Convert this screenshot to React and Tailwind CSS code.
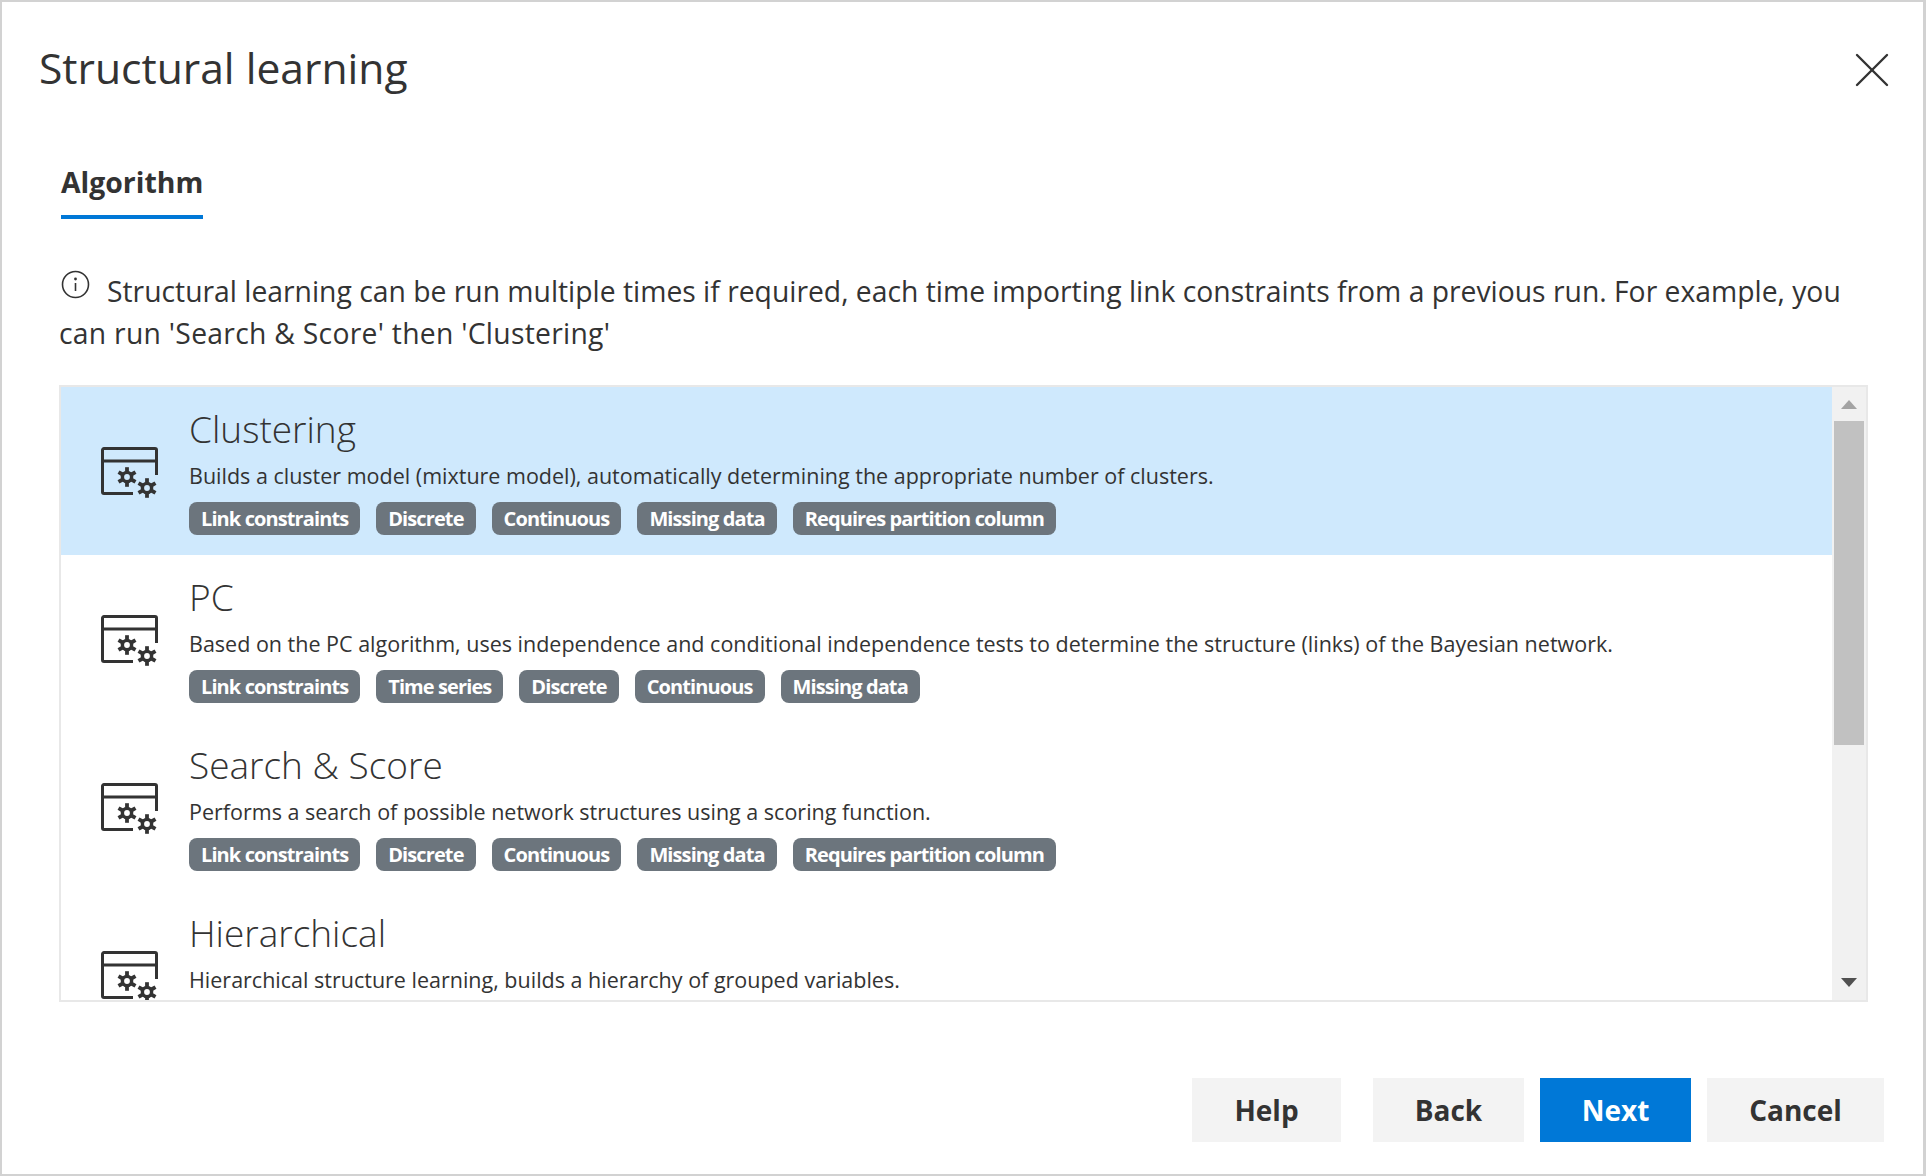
import React from 'react';
import { X } from 'lucide-react';

const ALGORITHMS = [
  {
    name: 'Clustering',
    desc: 'Builds a cluster model (mixture model), automatically determining the appropriate number of clusters.',
    tags: ['Link constraints', 'Discrete', 'Continuous', 'Missing data', 'Requires partition column'],
    selected: true,
  },
  {
    name: 'PC',
    desc: 'Based on the PC algorithm, uses independence and conditional independence tests to determine the structure (links) of the Bayesian network.',
    tags: ['Link constraints', 'Time series', 'Discrete', 'Continuous', 'Missing data'],
  },
  {
    name: 'Search & Score',
    desc: 'Performs a search of possible network structures using a scoring function.',
    tags: ['Link constraints', 'Discrete', 'Continuous', 'Missing data', 'Requires partition column'],
  },
  {
    name: 'Hierarchical',
    desc: 'Hierarchical structure learning, builds a hierarchy of grouped variables.',
    tags: [],
  },
];

// small cog used twice inside the algorithm icon
const Gear = ({ x, y }) => (
  <g transform={`translate(${x} ${y})`} stroke="#333" fill="none">
    <circle r="4.6" strokeWidth="3.4" />
    {[0, 60, 120, 180, 240, 300].map((a) => (
      <line key={a} x1="0" y1="-5.5" x2="0" y2="-9.8" strokeWidth="3.8" transform={`rotate(${a})`} />
    ))}
  </g>
);

const AlgorithmIcon = () => (
  <svg width="57" height="54" viewBox="0 0 57 54" className="shrink-0 mt-[60px]">
    <path
      d="M32 46.5H3a1.5 1.5 0 0 1-1.5-1.5V3A1.5 1.5 0 0 1 3 1.5h51A1.5 1.5 0 0 1 55.5 3v25"
      fill="none"
      stroke="#333"
      strokeWidth="3"
    />
    <line x1="1.5" y1="14" x2="55.5" y2="14" stroke="#333" strokeWidth="3" />
    <Gear x={26} y={30} />
    <Gear x={46} y={41} />
  </svg>
);

const Row = ({ item }) => (
  <div className={`h-[168px] shrink-0 flex items-start pl-10 ${item.selected ? 'bg-[#cfe9fd]' : ''}`}>
    <AlgorithmIcon />
    <div className="ml-[31px]">
      <div className="text-[37px] leading-[52px] font-light text-[#333] mt-4">{item.name}</div>
      <div className="text-[21.5px] leading-[30px] text-[#333] mt-1.5">{item.desc}</div>
      {item.tags.length > 0 && (
        <div className="flex gap-4 mt-[11px]">
          {item.tags.map((t) => (
            <span key={t} className="h-[33px] px-3 rounded-lg bg-[#6c757d] text-white text-[20px] leading-[33px] font-bold tracking-[-0.9px]">
              {t}
            </span>
          ))}
        </div>
      )}
    </div>
  </div>
);

const Scrollbar = () => (
  <div className="w-[34px] shrink-0 bg-[#f1f1f1] flex flex-col items-center">
    <div className="h-[34px] w-full flex items-center justify-center">
      <div className="w-0 h-0 border-x-[8px] border-x-transparent border-b-[9px] border-b-[#a3a3a3]" />
    </div>
    <div className="w-[30px] h-[324px] bg-[#c1c1c1]" />
    <div className="flex-1 flex items-end pb-[13px]">
      <div className="w-0 h-0 border-x-[8px] border-x-transparent border-t-[9px] border-t-[#505050]" />
    </div>
  </div>
);

const FooterButton = ({ children, primary, className = '' }) => (
  <button
    type="button"
    className={`h-16 font-bold text-[28px] ${primary ? 'bg-[#0078d7] text-white' : 'bg-[#f3f3f3] text-[#333]'} ${className}`}
  >
    {children}
  </button>
);

export default function App() {
  return (
    <div className="w-[1926px] h-[1176px] bg-white border-t-2 border-l-2 border-r-[3px] border-b-2 border-[#d2d2d2] flex flex-col text-[#333] font-['Open_Sans','Noto_Sans',sans-serif] overflow-hidden">
      {/* header */}
      <div className="flex items-start justify-between h-[128px] shrink-0 pl-[37px] pr-[21px]">
        <h1 className="text-[42.6px] leading-[60px] mt-[35px] font-normal">Structural learning</h1>
        <X size={60} strokeWidth={2.4} absoluteStrokeWidth className="mt-[38px] text-[#333]" />
      </div>

      {/* tab */}
      <div className="pl-[59px] shrink-0">
        <div className="inline-block h-[89px] pt-[33px] border-b-4 border-[#0078d7] text-[28.4px] leading-[38px] font-bold">
          Algorithm
        </div>
      </div>

      {/* intro */}
      <div className="pl-[57px] h-[84px] mt-[51px] text-[28.3px] leading-[42px] shrink-0">
        <div className="h-[42px] whitespace-nowrap">
          <svg width="29" height="29" viewBox="0 0 29 29" className="inline-block align-[3px] ml-[2px] mr-[17px]">
            <circle cx="14.5" cy="14.5" r="13" fill="none" stroke="#333" strokeWidth="1.6" />
            <circle cx="14.5" cy="9" r="1.4" fill="#333" />
            <line x1="14.5" y1="13" x2="14.5" y2="21" stroke="#333" strokeWidth="1.6" />
          </svg>
          Structural learning can be run multiple times if required, each time importing link constraints from a previous run. For example, you
        </div>
        <div className="h-[42px] tracking-[0.28px]">can run 'Search &amp; Score' then 'Clustering'</div>
      </div>

      {/* list */}
      <div className="ml-[57px] mr-[55px] mt-[31px] h-[617px] shrink-0 border-2 border-[#e8e8e8] flex overflow-hidden">
        <div className="flex-1 min-w-0 flex flex-col overflow-hidden">
          {ALGORITHMS.map((a) => (
            <Row key={a.name} item={a} />
          ))}
        </div>
        <Scrollbar />
      </div>

      {/* footer */}
      <div className="flex justify-end mt-[76px] pr-[39px]">
        <FooterButton className="w-[149px] mr-8">Help</FooterButton>
        <FooterButton className="w-[151px] mr-4">Back</FooterButton>
        <FooterButton primary className="w-[151px] mr-4">Next</FooterButton>
        <FooterButton className="w-[177px]">Cancel</FooterButton>
      </div>
    </div>
  );
}
